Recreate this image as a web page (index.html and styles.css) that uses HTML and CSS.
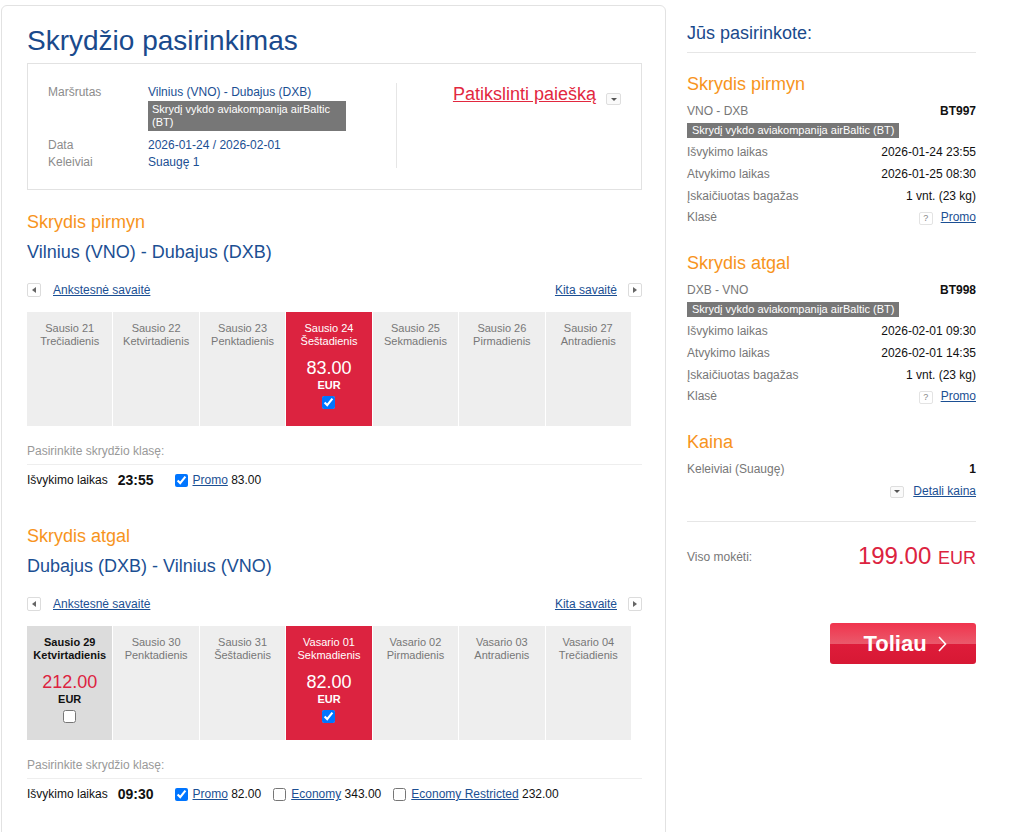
FILE: index.html
```html
<!DOCTYPE html>
<html lang="lt">
<head>
<meta charset="utf-8">
<title>Skrydžio pasirinkimas</title>
<link rel="stylesheet" href="styles.css">
</head>
<body>
<div class="page">
  <main class="card">
    <h1 class="title">Skrydžio pasirinkimas</h1>
    <section class="search">
      <div class="search-info">
        <div class="info-row">
          <span class="lbl">Maršrutas</span>
          <div class="val">Vilnius (VNO) - Dubajus (DXB)
            <div class="badge badge-box">Skrydį vykdo aviakompanija airBaltic (BT)</div>
          </div>
        </div>
        <div class="info-row"><span class="lbl">Data</span><div class="val">2026-01-24 / 2026-02-01</div></div>
        <div class="info-row"><span class="lbl">Keleiviai</span><div class="val">Suaugę 1</div></div>
      </div>
      <div class="divider"></div>
      <div class="refine">
        <a href="#">Patikslinti paiešką</a>
        <span class="dd"></span>
      </div>
    </section>

    <section class="leg">
      <h3 class="leg-title">Skrydis pirmyn</h3>
      <h2 class="route">Vilnius (VNO) - Dubajus (DXB)</h2>
      <div class="weeknav">
        <div class="nav-left"><span class="arrow arrow-left"></span><a href="#">Ankstesnė savaitė</a></div>
        <div class="nav-right"><a href="#">Kita savaitė</a><span class="arrow arrow-right"></span></div>
      </div>
      <div class="calendar">
        <div class="day"><div>Sausio 21</div><div>Trečiadienis</div></div>
        <div class="day"><div>Sausio 22</div><div>Ketvirtadienis</div></div>
        <div class="day"><div>Sausio 23</div><div>Penktadienis</div></div>
        <div class="day sel"><div>Sausio 24</div><div>Šeštadienis</div><div class="price">83.00</div><div class="cur">EUR</div><input type="checkbox" checked></div>
        <div class="day"><div>Sausio 25</div><div>Sekmadienis</div></div>
        <div class="day"><div>Sausio 26</div><div>Pirmadienis</div></div>
        <div class="day"><div>Sausio 27</div><div>Antradienis</div></div>
      </div>
      <div class="class-head">Pasirinkite skrydžio klasę:</div>
      <div class="class-row">
        <span class="dep">Išvykimo laikas</span>
        <span class="time">23:55</span>
        <label class="opt first"><input type="checkbox" checked><span><a href="#">Promo</a> 83.00</span></label>
      </div>
    </section>

    <section class="leg">
      <h3 class="leg-title">Skrydis atgal</h3>
      <h2 class="route">Dubajus (DXB) - Vilnius (VNO)</h2>
      <div class="weeknav">
        <div class="nav-left"><span class="arrow arrow-left"></span><a href="#">Ankstesnė savaitė</a></div>
        <div class="nav-right"><a href="#">Kita savaitė</a><span class="arrow arrow-right"></span></div>
      </div>
      <div class="calendar">
        <div class="day avail"><div>Sausio 29</div><div>Ketvirtadienis</div><div class="price">212.00</div><div class="cur">EUR</div><input type="checkbox"></div>
        <div class="day"><div>Sausio 30</div><div>Penktadienis</div></div>
        <div class="day"><div>Sausio 31</div><div>Šeštadienis</div></div>
        <div class="day sel"><div>Vasario 01</div><div>Sekmadienis</div><div class="price">82.00</div><div class="cur">EUR</div><input type="checkbox" checked></div>
        <div class="day"><div>Vasario 02</div><div>Pirmadienis</div></div>
        <div class="day"><div>Vasario 03</div><div>Antradienis</div></div>
        <div class="day"><div>Vasario 04</div><div>Trečiadienis</div></div>
      </div>
      <div class="class-head">Pasirinkite skrydžio klasę:</div>
      <div class="class-row">
        <span class="dep">Išvykimo laikas</span>
        <span class="time">09:30</span>
        <label class="opt first"><input type="checkbox" checked><span><a href="#">Promo</a> 82.00</span></label>
        <label class="opt"><input type="checkbox"><span><a href="#">Economy</a> 343.00</span></label>
        <label class="opt"><input type="checkbox"><span><a href="#">Economy Restricted</a> 232.00</span></label>
      </div>
    </section>
  </main>

  <aside class="summary">
    <h2 class="sum-title">Jūs pasirinkote:</h2>

    <h3 class="sum-h">Skrydis pirmyn</h3>
    <div class="srow"><span>VNO - DXB</span><span class="v b">BT997</span></div>
    <div class="badge sum-badge">Skrydį vykdo aviakompanija airBaltic (BT)</div>
    <div class="srow"><span>Išvykimo laikas</span><span class="v">2026-01-24 23:55</span></div>
    <div class="srow"><span>Atvykimo laikas</span><span class="v">2026-01-25 08:30</span></div>
    <div class="srow"><span>Įskaičiuotas bagažas</span><span class="v">1 vnt. (23 kg)</span></div>
    <div class="srow"><span>Klasė</span><span class="v cls"><span class="qbox">?</span><a href="#">Promo</a></span></div>

    <h3 class="sum-h next">Skrydis atgal</h3>
    <div class="srow"><span>DXB - VNO</span><span class="v b">BT998</span></div>
    <div class="badge sum-badge">Skrydį vykdo aviakompanija airBaltic (BT)</div>
    <div class="srow"><span>Išvykimo laikas</span><span class="v">2026-02-01 09:30</span></div>
    <div class="srow"><span>Atvykimo laikas</span><span class="v">2026-02-01 14:35</span></div>
    <div class="srow"><span>Įskaičiuotas bagažas</span><span class="v">1 vnt. (23 kg)</span></div>
    <div class="srow"><span>Klasė</span><span class="v cls"><span class="qbox">?</span><a href="#">Promo</a></span></div>

    <h3 class="sum-h next">Kaina</h3>
    <div class="srow"><span>Keleiviai (Suaugę)</span><span class="v b">1</span></div>
    <div class="srow end"><span class="v cls"><span class="dd small"></span><a href="#">Detali kaina</a></span></div>

    <div class="sum-line"></div>
    <div class="total">
      <span class="total-lbl">Viso mokėti:</span>
      <span class="total-val">199.00 <span class="total-cur">EUR</span></span>
    </div>
    <div class="btn-row">
      <a class="btn" href="#">Toliau
        <svg width="10" height="16" viewBox="0 0 10 16"><polyline points="2,1 8.5,8 2,15" fill="none" stroke="#fff" stroke-width="1.6"/></svg>
      </a>
    </div>
  </aside>
</div>
</body>
</html>
```

FILE: styles.css
```css
* { box-sizing: border-box; }

body {
  margin: 0;
  background: #fff;
  color: #222;
  font-family: "Liberation Sans", Arial, sans-serif;
}

a { color: #1b4f93; text-decoration: underline; }

.page {
  display: flex;
  align-items: flex-start;
  gap: 21px;
  padding: 5px 0 0 1px;
}

/* ---------- left card ---------- */
.card {
  flex: none;
  width: 665px;
  min-height: 870px;
  border: 1px solid #e2e2e2;
  border-radius: 6px;
  padding: 0 23px 0 25px;
}

.title {
  margin: 0;
  padding-top: 19px;
  font-size: 28px;
  line-height: 32px;
  font-weight: normal;
  color: #1a4a8c;
}

.search {
  margin-top: 6px;
  border: 1px solid #e2e2e2;
  padding: 20px 20px 18px 20px;
  display: flex;
}

.search-info {
  width: 348px;
  font-size: 12px;
  line-height: 17px;
}

.info-row { display: flex; }

.lbl {
  flex: none;
  width: 100px;
  color: #8c8c8c;
}

.val { color: #1b4f93; }

.badge {
  background: #777;
  color: #fff;
  font-size: 11px;
}

.badge-box {
  width: 198px;
  padding: 2px 4px;
  line-height: 13px;
  margin-bottom: 6px;
}

.divider {
  width: 1px;
  height: 85px;
  margin-top: -1px;
  background: #e6e6e6;
}

.refine {
  flex: 1;
  display: flex;
  justify-content: flex-end;
  align-items: flex-start;
  gap: 10px;
}

.refine a {
  font-size: 18px;
  line-height: 20px;
  color: #e2283f;
}

.dd {
  width: 15px;
  height: 12px;
  margin-top: 9px;
  border: 1px solid #dedede;
  border-radius: 2px;
  background: #fafafa;
  display: flex;
  align-items: center;
  justify-content: center;
}

.dd::after {
  content: "";
  border-left: 3px solid transparent;
  border-right: 3px solid transparent;
  border-top: 3px solid #555;
}

.dd.small {
  width: 14px;
  height: 12px;
  margin-top: 0;
  margin-right: 9px;
}

/* ---------- legs ---------- */
.leg { padding-bottom: 14px; }

.leg-title {
  margin: 21px 0 0;
  font-size: 18px;
  line-height: 22px;
  font-weight: normal;
  color: #f7941d;
}

.route {
  margin: 8px 0 0;
  font-size: 18px;
  line-height: 22px;
  font-weight: normal;
  color: #1b4f93;
}

.weeknav {
  margin-top: 19px;
  height: 16px;
  display: flex;
  justify-content: space-between;
  align-items: center;
  font-size: 12px;
}

.nav-left, .nav-right {
  display: flex;
  align-items: center;
}

.nav-left { gap: 12px; }
.nav-right { gap: 11px; }

.arrow {
  width: 14px;
  height: 14px;
  border: 1px solid #dcdcdc;
  border-radius: 2px;
  background: #fff;
  display: flex;
  align-items: center;
  justify-content: center;
}

.arrow-left::after {
  content: "";
  border-top: 3px solid transparent;
  border-bottom: 3px solid transparent;
  border-right: 4px solid #666;
}

.arrow-right::after {
  content: "";
  border-top: 3px solid transparent;
  border-bottom: 3px solid transparent;
  border-left: 4px solid #666;
}

.calendar {
  margin-top: 14px;
  width: 604px;
  height: 114px;
  display: grid;
  grid-template-columns: repeat(7, 1fr);
  gap: 1px;
}

.day {
  background: #eee;
  text-align: center;
  padding-top: 10px;
  font-size: 11px;
  line-height: 13px;
  color: #777;
}

.day.sel {
  background: #dc2340;
  color: #fff;
}

.day.avail {
  background: #dcdcdc;
  color: #111;
  font-weight: bold;
}

.price {
  margin-top: 9px;
  font-size: 18px;
  line-height: 22px;
  font-weight: normal;
}

.day.avail .price { color: #dc2340; }

.cur {
  font-size: 11px;
  line-height: 13px;
  font-weight: bold;
}

.day input {
  display: block;
  width: 13px;
  height: 13px;
  margin: 4px auto 0;
}

.class-head {
  margin-top: 16px;
  padding-bottom: 4px;
  border-bottom: 1px solid #eee;
  font-size: 12px;
  line-height: 18px;
  color: #999;
}

.class-row {
  margin-top: 5px;
  height: 20px;
  display: flex;
  align-items: center;
  font-size: 12px;
  color: #111;
}

.time {
  margin-left: 10px;
  font-size: 14px;
  font-weight: bold;
}

.opt {
  display: flex;
  align-items: center;
  margin-left: 8px;
}

.opt.first { margin-left: 17px; }

.opt input {
  width: 13px;
  height: 13px;
  margin: 0 5px 0 4px;
}

/* ---------- summary ---------- */
.summary {
  flex: none;
  width: 289px;
  margin-top: 17px;
}

.sum-title {
  margin: 0;
  padding-bottom: 8px;
  border-bottom: 1px solid #e6e6e6;
  font-size: 18px;
  line-height: 22px;
  font-weight: normal;
  color: #1a4a8c;
}

.sum-h {
  margin: 20px 0 6px;
  font-size: 18px;
  line-height: 22px;
  font-weight: normal;
  color: #f7941d;
}

.sum-h.next { margin-top: 23.3px; }

.srow {
  display: flex;
  justify-content: space-between;
  align-items: center;
  font-size: 12px;
  line-height: 21.67px;
  color: #777;
}

.srow.end { justify-content: flex-end; }

.srow .v { color: #111; }
.srow .b { font-weight: bold; }

.cls {
  display: flex;
  align-items: center;
}

.sum-badge {
  width: fit-content;
  padding: 0 5px;
  line-height: 15px;
  margin-bottom: 4.5px;
}

.qbox {
  width: 14px;
  height: 13px;
  margin-right: 8px;
  border: 1px solid #e3e3e3;
  border-radius: 2px;
  font-size: 9px;
  line-height: 11px;
  text-align: center;
  color: #888;
}

.sum-line {
  margin-top: 18.5px;
  border-top: 1px solid #e6e6e6;
}

.total {
  margin-top: 20px;
  height: 30px;
  display: flex;
  justify-content: space-between;
  align-items: center;
}

.total-lbl {
  font-size: 12px;
  color: #777;
}

.total-val {
  font-size: 24px;
  line-height: 30px;
  color: #dc2340;
}

.total-cur { font-size: 18px; }

.btn-row {
  margin-top: 51px;
  display: flex;
  justify-content: flex-end;
}

.btn {
  width: 146px;
  height: 41px;
  border-radius: 3px;
  background: linear-gradient(to bottom, #f0344d 0%, #ea5a6c 52%, #de1c3a 52%, #d71834 100%);
  color: #fff;
  text-decoration: none;
  font-size: 22px;
  font-weight: bold;
  display: flex;
  align-items: center;
  justify-content: center;
  gap: 10px;
  padding-left: 4px;
}
```
